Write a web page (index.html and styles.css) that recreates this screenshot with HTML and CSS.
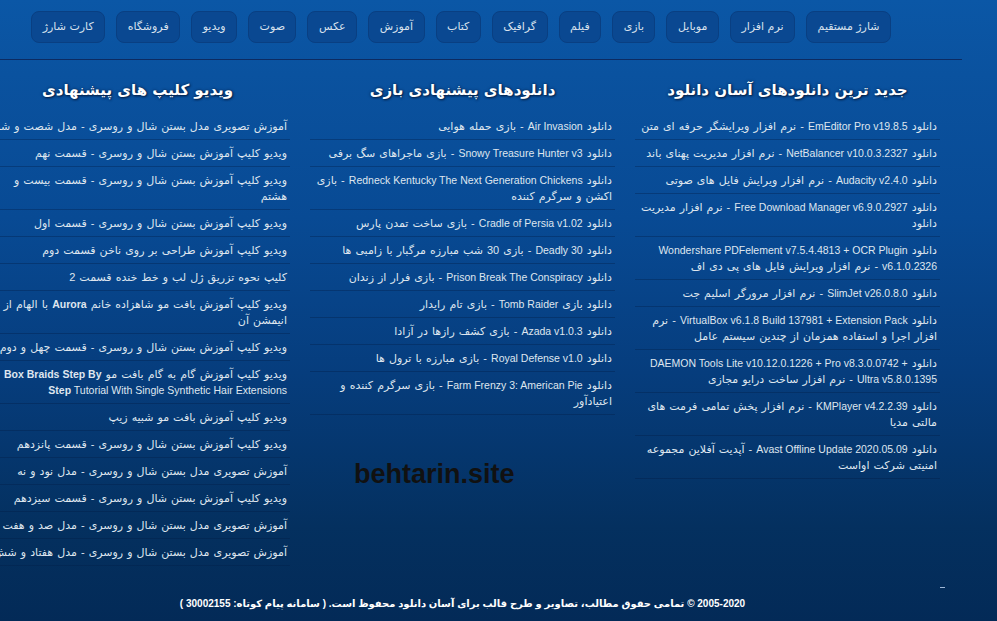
FILE: index.html
```html
<!DOCTYPE html>
<html lang="fa" dir="rtl">
<head>
<meta charset="utf-8">
<title>آسان دانلود</title>
<link rel="stylesheet" href="styles.css">
</head>
<body>
<header class="header">
  <nav class="nav">
    <a class="nav-btn" href="#">شارژ مستقیم</a>
    <a class="nav-btn" href="#">نرم افزار</a>
    <a class="nav-btn" href="#">موبایل</a>
    <a class="nav-btn" href="#">بازی</a>
    <a class="nav-btn" href="#">فیلم</a>
    <a class="nav-btn" href="#">گرافیک</a>
    <a class="nav-btn" href="#">کتاب</a>
    <a class="nav-btn" href="#">آموزش</a>
    <a class="nav-btn" href="#">عکس</a>
    <a class="nav-btn" href="#">صوت</a>
    <a class="nav-btn" href="#">ویدیو</a>
    <a class="nav-btn" href="#">فروشگاه</a>
    <a class="nav-btn" href="#">کارت شارژ</a>
  </nav>
</header>

<main class="cols">
  <section class="col">
    <h2 class="col-title">جدید ترین دانلودهای آسان دانلود</h2>
    <ul class="list">
      <li>دانلود <span class="en">EmEditor Pro v19.8.5</span> - نرم افزار ویرایشگر حرفه ای متن</li>
      <li>دانلود <span class="en">NetBalancer v10.0.3.2327</span> - نرم افزار مدیریت پهنای باند</li>
      <li>دانلود <span class="en">Audacity v2.4.0</span> - نرم افزار ویرایش فایل های صوتی</li>
      <li>دانلود <span class="en">Free Download Manager v6.9.0.2927</span> - نرم افزار مدیریت دانلود</li>
      <li>دانلود <span class="en">Wondershare PDFelement v7.5.4.4813 + OCR Plugin v6.1.0.2326</span> - نرم افزار ویرایش فایل های پی دی اف</li>
      <li>دانلود <span class="en">SlimJet v26.0.8.0</span> - نرم افزار مرورگر اسلیم جت</li>
      <li>دانلود <span class="en">VirtualBox v6.1.8 Build 137981 + Extension Pack</span> - نرم افزار اجرا و استفاده همزمان از چندین سیستم عامل</li>
      <li>دانلود <span class="en">DAEMON Tools Lite v10.12.0.1226 + Pro v8.3.0.0742 + Ultra v5.8.0.1395</span> - نرم افزار ساخت درایو مجازی</li>
      <li>دانلود <span class="en">KMPlayer v4.2.2.39</span> - نرم افزار پخش تمامی فرمت های مالتی مدیا</li>
      <li>دانلود <span class="en">Avast Offline Update 2020.05.09</span> - آپدیت آفلاین مجموعه امنیتی شرکت اواست</li>
    </ul>
  </section>

  <section class="col">
    <h2 class="col-title">دانلودهای پیشنهادی بازی</h2>
    <ul class="list">
      <li>دانلود <span class="en">Air Invasion</span> - بازی حمله هوایی</li>
      <li>دانلود <span class="en">Snowy Treasure Hunter v3</span> - بازی ماجراهای سگ برفی</li>
      <li>دانلود <span class="en">Redneck Kentucky The Next Generation Chickens</span> - بازی اکشن و سرگرم کننده</li>
      <li>دانلود <span class="en">Cradle of Persia v1.02</span> - بازی ساخت تمدن پارس</li>
      <li>دانلود <span class="en">Deadly 30</span> - بازی 30 شب مبارزه مرگبار با زامبی ها</li>
      <li>دانلود <span class="en">Prison Break The Conspiracy</span> - بازی فرار از زندان</li>
      <li>دانلود بازی <span class="en">Tomb Raider</span> - بازی تام رایدار</li>
      <li>دانلود <span class="en">Azada v1.0.3</span> - بازی کشف رازها در آزادا</li>
      <li>دانلود <span class="en">Royal Defense v1.0</span> - بازی مبارزه با ترول ها</li>
      <li>دانلود <span class="en">Farm Frenzy 3: American Pie</span> - بازی سرگرم کننده و اعتیادآور</li>
    </ul>
  </section>

  <section class="col">
    <h2 class="col-title">ویدیو کلیپ های پیشنهادی</h2>
    <ul class="list">
      <li>آموزش تصویری مدل بستن شال و روسری - مدل شصت و شش</li>
      <li>ویدیو کلیپ آموزش بستن شال و روسری - قسمت نهم</li>
      <li>ویدیو کلیپ آموزش بستن شال و روسری - قسمت بیست و هشتم</li>
      <li>ویدیو کلیپ آموزش بستن شال و روسری - قسمت اول</li>
      <li>ویدیو کلیپ آموزش طراحی بر روی ناخن قسمت دوم</li>
      <li>کلیپ نحوه تزریق ژل لب و خط خنده قسمت 2</li>
      <li>ویدیو کلیپ آموزش بافت مو شاهزاده خانم <b class="en">Aurora</b> با الهام از انیمشن آن</li>
      <li>ویدیو کلیپ آموزش بستن شال و روسری - قسمت چهل و دوم</li>
      <li>ویدیو کلیپ آموزش گام به گام بافت مو <span class="en"><b>Box Braids Step By Step</b> Tutorial With Single Synthetic Hair Extensions</span></li>
      <li>ویدیو کلیپ آموزش بافت مو شبیه زیپ</li>
      <li>ویدیو کلیپ آموزش بستن شال و روسری - قسمت پانزدهم</li>
      <li>آموزش تصویری مدل بستن شال و روسری - مدل نود و نه</li>
      <li>ویدیو کلیپ آموزش بستن شال و روسری - قسمت سیزدهم</li>
      <li>آموزش تصویری مدل بستن شال و روسری - مدل صد و هفت</li>
      <li>آموزش تصویری مدل بستن شال و روسری - مدل هفتاد و شش</li>
    </ul>
  </section>
</main>

<footer class="footer">2005-2020 © تمامی حقوق مطالب، تصاویر و طرح قالب برای آسان دانلود محفوظ است. ( سامانه پیام کوتاه: <b>30002155</b> )</footer>

<div class="watermark">behtarin.site</div>
<span class="to-top"></span>
</body>
</html>
```

FILE: styles.css
```css
html, body {
  margin: 0;
  padding: 0;
}

body {
  width: 997px;
  height: 621px;
  overflow: hidden;
  position: relative;
  direction: rtl;
  background: linear-gradient(to bottom, #0b57a6 0%, #0a529f 12%, #084a94 35%, #063d7d 60%, #04305f 85%, #032a57 100%);
  font-family: "Liberation Sans", "DejaVu Sans", sans-serif;
  color: #dfe6ef;
}

.header {
  margin-right: 35px;
  height: 59px;
  border-bottom: 1px solid #0c2b62;
}

.nav {
  display: flex;
  gap: 11px;
  padding-top: 11px;
  padding-right: 71px;
}

.nav-btn {
  display: flex;
  align-items: center;
  height: 32px;
  box-sizing: border-box;
  padding: 0 10.5px 2px;
  border-radius: 8px;
  background: #0a4891;
  border: 1px solid #093f82;
  color: #d9e2ee;
  font-family: "DejaVu Sans", sans-serif;
  font-size: 11px;
  text-decoration: none;
  white-space: nowrap;
}

.cols {
  display: flex;
  gap: 20px;
  margin-right: 57px;
  align-items: flex-start;
}

.col {
  flex: 0 0 305px;
}

.col-title {
  margin: 0;
  height: 53px;
  box-sizing: border-box;
  padding-top: 19px;
  line-height: 22px;
  text-align: center;
  font-family: "DejaVu Sans", sans-serif;
  font-size: 15px;
  font-weight: bold;
  color: #ffffff;
  text-shadow: 1px 1px 2px #06224a, 0 0 3px #06224a;
}

.list {
  list-style: none;
  margin: 0;
  padding: 0;
}

.list li {
  padding: 5px 3px 5px 0;
  line-height: 16px;
  font-size: 11px;
  word-spacing: 1px;
  border-bottom: 1px solid rgba(3, 30, 70, 0.35);
}

.list .en {
  font-size: 10.5px;
  word-spacing: 0;
}

.list li b {
  font-weight: bold;
}

.footer {
  width: 955px;
  margin-right: 57px;
  padding-top: 32px;
  text-align: center;
  font-size: 10px;
  font-weight: bold;
  color: #ffffff;
}

.watermark {
  position: absolute;
  left: 354px;
  top: 459px;
  font-family: "Liberation Sans", sans-serif;
  font-size: 27px;
  font-weight: bold;
  color: #111111;
  direction: ltr;
}

.to-top {
  position: absolute;
  left: 940px;
  top: 587px;
  width: 5px;
  height: 1px;
  background: #9fb8d8;
}
```
